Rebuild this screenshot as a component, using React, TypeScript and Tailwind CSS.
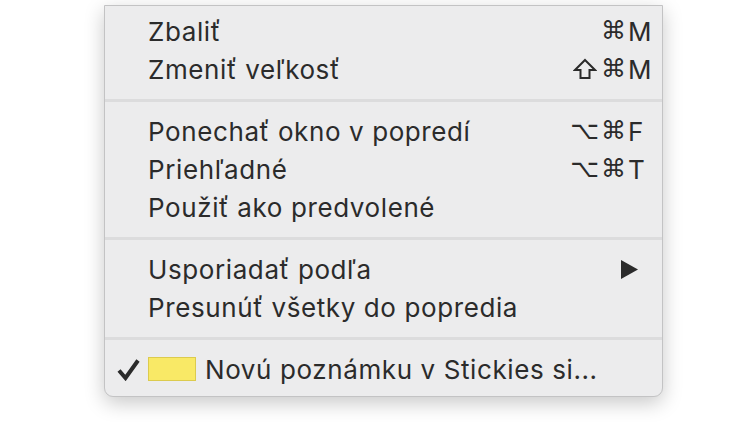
type Item = {
  label: string;
  mods?: string;
  keyChar?: string;
  submenu?: boolean;
};

const groups: Item[][] = [
  [
    { label: "Zbaliť", mods: "⌘", keyChar: "M" },
    { label: "Zmeniť veľkosť", mods: "⇧⌘", keyChar: "M" },
  ],
  [
    { label: "Ponechať okno v popredí", mods: "⌥⌘", keyChar: "F" },
    { label: "Priehľadné", mods: "⌥⌘", keyChar: "T" },
    { label: "Použiť ako predvolené" },
  ],
  [
    { label: "Usporiadať podľa", submenu: true },
    { label: "Presunúť všetky do popredia" },
  ],
];

function ShiftIcon() {
  return (
    <svg width="24" height="22" viewBox="0 0 24 22" className="mr-[4px]">
      <path
        d="M12 2 L22 12 L16.5 12 L16.5 20 L7.5 20 L7.5 12 L2 12 Z"
        fill="none"
        stroke="#2b2b2b"
        strokeWidth="2"
        strokeLinejoin="miter"
      />
    </svg>
  );
}

function MenuRow({ label, mods, keyChar, submenu }: Item) {
  const hasShift = mods?.startsWith("⇧");
  const rest = hasShift ? mods!.slice(1) : mods;
  return (
    <div className="flex h-[38px] items-center justify-between pl-[43px] pr-[12px]">
      <span>{label}</span>
      {keyChar && (
        <span className="flex items-center">
          {hasShift && <ShiftIcon />}
          <span className="text-right font-['DejaVu_Sans',sans-serif] text-[25px] tracking-[2px]">
            {rest}
          </span>
          <span className="w-[22px]">{keyChar}</span>
        </span>
      )}
      {submenu && (
        <svg width="17" height="19" viewBox="0 0 17 19" className="mr-[12px]">
          <polygon points="0,0 17,9.5 0,19" fill="#2b2b2b" />
        </svg>
      )}
    </div>
  );
}

function Separator() {
  return (
    <div className="flex h-[24px] flex-col justify-center">
      <div className="h-[3px] bg-[#dcdcdd]" />
    </div>
  );
}

export default function App() {
  return (
    <div className="h-[422px] w-[750px] overflow-hidden bg-white pl-[104px] pt-[5px]">
      <div className="w-[559px] rounded-b-[9px] border border-[#c3c3c4] bg-[#ececed] pb-[8px] pt-[6px] font-['Inter',sans-serif] text-[26px] tracking-[0.6px] text-[#2b2b2b] shadow-[0_6px_20px_rgba(0,0,0,0.22)]">
        {groups.map((group, gi) => (
          <div key={gi}>
            {group.map((item) => (
              <MenuRow key={item.label} {...item} />
            ))}
            <Separator />
          </div>
        ))}
        <div className="flex h-[38px] items-center pl-[12px]">
          <svg width="23" height="23" viewBox="0 0 23 23" className="mr-[8px]">
            <path
              d="M2 12.5 L8.5 20 L21 2.5"
              fill="none"
              stroke="#2b2b2b"
              strokeWidth="4"
              strokeLinejoin="miter"
            />
          </svg>
          <span className="mr-[9px] h-[24px] w-[48px] border border-[#dccb4e] bg-[#f9e966]" />
          <span>Novú poznámku v Stickies si...</span>
        </div>
      </div>
    </div>
  );
}
